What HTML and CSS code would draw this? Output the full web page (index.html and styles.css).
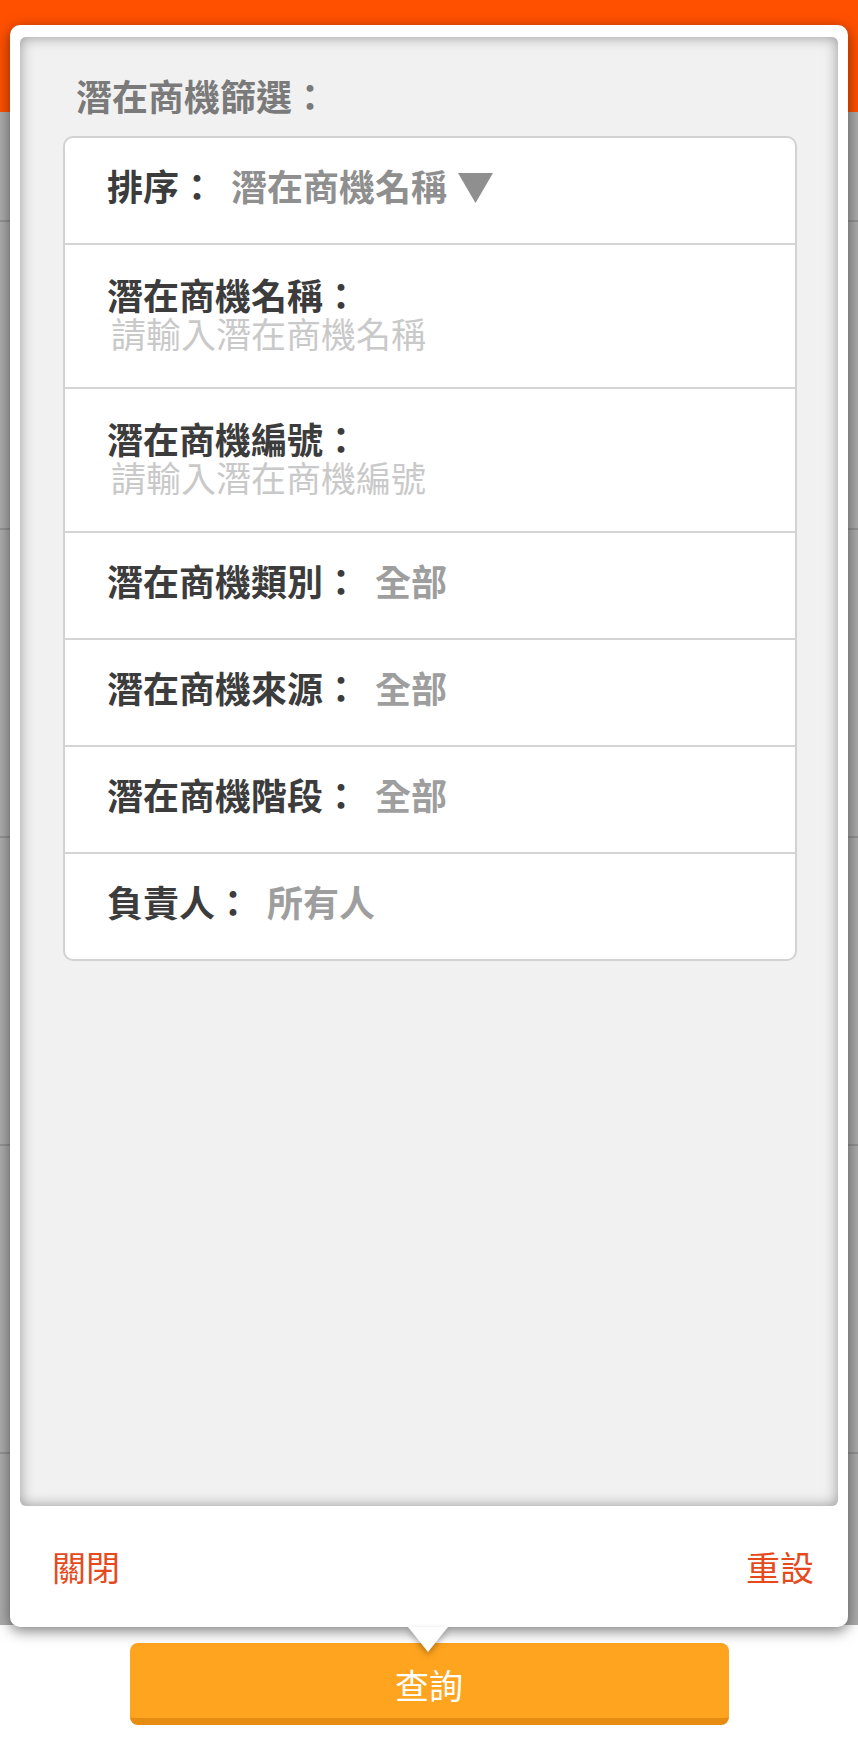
FILE: index.html
```html
<!DOCTYPE html>
<html lang="zh-Hant">
<head>
<meta charset="utf-8">
<title>潛在商機篩選</title>
<link rel="stylesheet" href="styles.css">
</head>
<body>
<div class="screen">
  <header class="topbar"></header>
  <div class="list">
    <div class="list-row list-row-first"></div>
    <div class="list-row"></div>
    <div class="list-row"></div>
    <div class="list-row"></div>
    <div class="list-row"></div>
    <div class="list-row"></div>
  </div>
  <footer class="footer">
    <button class="query" type="button">查詢</button>
  </footer>

  <div class="popup">
    <div class="panel">
      <div class="panel-title">潛在商機篩選：</div>
      <div class="card">
        <div class="row">
          <span class="label">排序：</span>
          <span class="value value-sort">潛在商機名稱</span>
          <svg class="caret" width="35" height="30" viewBox="0 0 35 30"><polygon points="0,0 35,0 17.5,30" fill="#8f8f8f"/></svg>
        </div>
        <div class="row row-input">
          <div class="label">潛在商機名稱：</div>
          <input class="input" type="text" placeholder="請輸入潛在商機名稱">
        </div>
        <div class="row row-input">
          <div class="label">潛在商機編號：</div>
          <input class="input" type="text" placeholder="請輸入潛在商機編號">
        </div>
        <div class="row">
          <span class="label">潛在商機類別：</span>
          <span class="value">全部</span>
        </div>
        <div class="row">
          <span class="label">潛在商機來源：</span>
          <span class="value">全部</span>
        </div>
        <div class="row">
          <span class="label">潛在商機階段：</span>
          <span class="value">全部</span>
        </div>
        <div class="row row-last">
          <span class="label">負責人：</span>
          <span class="value">所有人</span>
        </div>
      </div>
    </div>
    <div class="popup-actions">
      <span class="action">關閉</span>
      <span class="action">重設</span>
    </div>
  </div>
</div>
</body>
</html>
```

FILE: styles.css
```css
* { box-sizing: border-box; }

html, body {
  margin: 0;
  padding: 0;
}

body {
  width: 858px;
  height: 1744px;
  overflow: hidden;
  background: #ffffff;
  font-family: "Noto Sans CJK TC", "Noto Sans", sans-serif;
}

.screen {
  position: relative;
  width: 858px;
  height: 1744px;
}

.topbar {
  height: 112px;
  background: #ff5000;
}

.list {
  height: 1513px;
  background: #ababab;
  overflow: hidden;
}

.list-row {
  height: 308px;
  border-bottom: 2px solid #939393;
}

.list-row-first {
  height: 110px;
}

.footer {
  height: 119px;
  background: #ffffff;
  padding-top: 18px;
}

.query {
  display: block;
  width: 599px;
  height: 82px;
  margin: 0 auto;
  padding: 8px 0 0;
  border: none;
  border-bottom: 7px solid #e68c12;
  border-radius: 8px;
  background: #ffa41f;
  color: #ffffff;
  font-family: "Noto Sans CJK TC", "Noto Sans", sans-serif;
  font-size: 34px;
  line-height: 67px;
  text-align: center;
}

/* popup overlay */
.popup {
  position: absolute;
  left: 10px;
  top: 25px;
  width: 838px;
  height: 1602px;
  background: #ffffff;
  border-radius: 10px;
  box-shadow: 0 4px 14px rgba(0, 0, 0, 0.5);
}

.popup::after {
  content: "";
  position: absolute;
  left: 398px;
  bottom: -25px;
  width: 0;
  height: 0;
  border-left: 20px solid transparent;
  border-right: 20px solid transparent;
  border-top: 25px solid #ffffff;
  filter: drop-shadow(0 3px 3px rgba(0, 0, 0, 0.3));
}

.panel {
  height: 1469px;
  margin: 12px 10px 0;
  padding: 40px 0 0 43px;
  background: #f1f1f1;
  border-radius: 6px;
  box-shadow: inset 0 0 14px rgba(0, 0, 0, 0.38);
}

.panel-title {
  padding-left: 13px;
  font-size: 36px;
  line-height: 36px;
  font-weight: 700;
  color: #7a7a7a;
}

.card {
  width: 734px;
  margin-top: 23px;
  background: #ffffff;
  border: 2px solid #d2d2d2;
  border-radius: 10px;
}

.row {
  display: flex;
  align-items: center;
  padding: 29px 0 40px 42px;
  border-bottom: 2px solid #d4d4d4;
  font-size: 36px;
  line-height: 36px;
}

.row-last {
  border-bottom: none;
}

.row-input {
  display: block;
  padding: 28px 0 36px 42px;
}

.label {
  font-weight: 700;
  color: #3c3c3c;
}

.row-input .label {
  line-height: 42px;
}

.value {
  margin-left: 16px;
  font-weight: 700;
  color: #9e9e9e;
}

.value-sort {
  color: #8f8f8f;
}

.caret {
  display: block;
  margin: 6px 0 0 11px;
}

.input {
  display: block;
  width: 640px;
  height: 36px;
  margin: 0 0 0 4px;
  padding: 0;
  border: none;
  outline: none;
  background: transparent;
  font-family: "Noto Sans CJK TC", "Noto Sans", sans-serif;
  font-size: 35px;
  line-height: 36px;
  color: #333333;
}

.input::placeholder {
  color: #c9c9c9;
  opacity: 1;
}

.popup-actions {
  display: flex;
  justify-content: space-between;
  align-items: center;
  height: 121px;
  padding: 0 34px 0 42px;
}

.action {
  font-size: 34px;
  line-height: 34px;
  color: #e64a1c;
}
```
